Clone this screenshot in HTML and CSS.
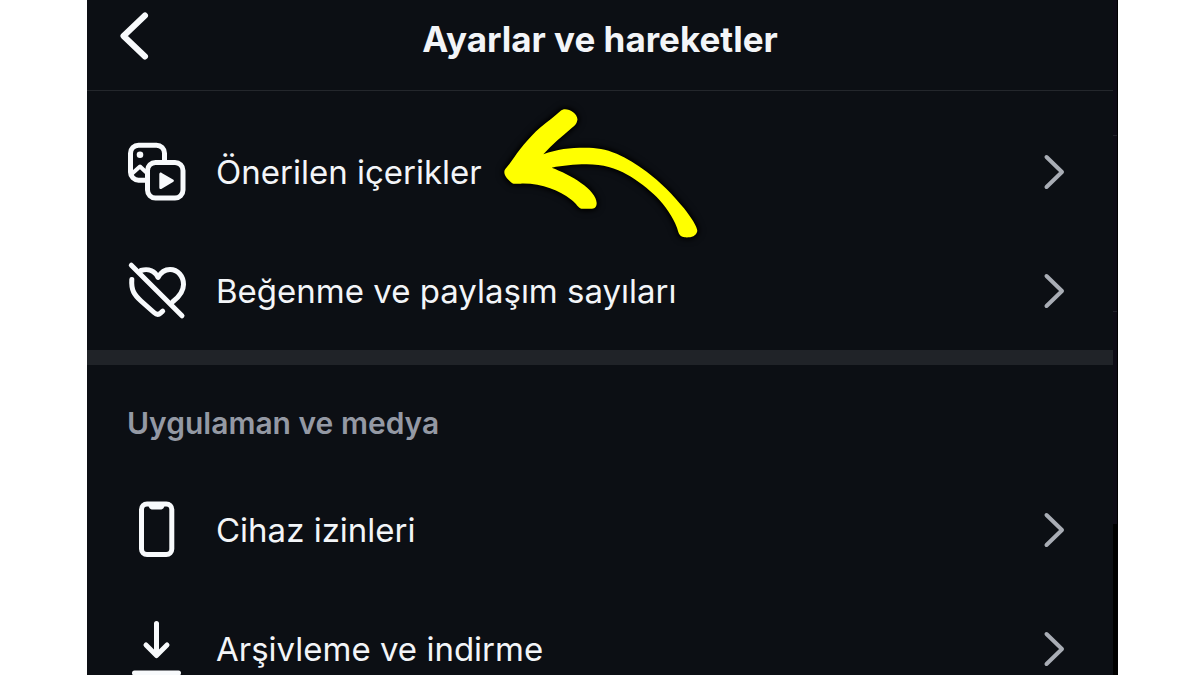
FILE: index.html
```html
<!DOCTYPE html>
<html lang="tr">
<head>
  <meta charset="UTF-8">
  <meta name="viewport" content="width=device-width, initial-scale=1.0">
  <title>Ayarlar ve hareketler</title>
  <link rel="stylesheet" href="styles.css">
</head>
<body>

  <div class="phone">
    <div class="screen">
      <header class="header">
        <button class="back-btn" type="button" aria-label="Geri">
          <svg viewBox="0 0 40 52"><path d="M30 5.500 8.500 26 30 46.500"/></svg>
        </button>
        <h1 class="title">Ayarlar ve hareketler</h1>
      </header>

      <main>
        <ul class="menu menu-top">
          <li>
            <a class="row" href="#">
              <svg class="icon" viewBox="0 0 59 59">
                <path d="M18 38.200h-6.500a8 8 0 0 1-8-8v-19a8 8 0 0 1 8-8h18a8 8 0 0 1 8 8V19"/>
                <path class="thin" d="M4 32.500l9-8 8 7.500"/>
                <circle class="solid" cx="13" cy="12.700" r="3.300"/>
                <rect x="20.500" y="20.500" width="35.500" height="35.500" rx="8"/>
                <path class="solid" d="M32.300 32.200v13.200c0 1.400 1.300 2 2.400 1.300l11.300-6.600c1.200-.7 1.200-2 0-2.700l-11.300-6.500c-1.100-.7-2.400-.1-2.400 1.300z"/>
              </svg>
              <span class="label">Önerilen içerikler
                <svg class="pointer" viewBox="0 0 660 450" aria-hidden="true">
                  <path d="M214 46C228 34 266 54 262 76C260 88 252 94 246 98C216 124 186 148 160 178C200 162 240 158 285 158C320 158 346 162 380 176C412 190 440 208 470 230C510 260 550 300 582 340C604 368 622 396 622 408C618 426 600 428 584 427C564 424 566 410 560 396C550 368 524 330 500 306C476 282 440 254 412 239C376 220 340 208 290 208C250 208 220 212 185 218C240 238 320 284 320 324C320 334 316 341 306 341H274C264 338 260 326 244 314C206 286 154 264 92 266C80 266 72 268 66 264C56 254 42 244 43 230C44 222 54 214 62 202C86 166 116 128 150 98C176 78 196 62 214 46Z"/>
                </svg>
              </span>
              <svg class="chevron" viewBox="0 0 24 36"><path d="M4.500 3 20 18 4.500 33"/></svg>
            </a>
          </li>
          <li>
            <a class="row" href="#">
              <svg class="icon" viewBox="0 0 59 59">
                <path d="M14 9.500c8-2.500 14 1 17 7C34 11 38.500 8.500 43 8.500c8 0 13.500 7 13.500 15 0 7-4 12-10.500 17"/>
                <path d="M4.800 18.500c-.8 11 2.700 15.500 9.200 21.500L27 51.500c2.500 2.300 4.500 2.500 6.500.7l2.200-2"/>
                <path d="M4.300 4.200 55 54.800"/>
              </svg>
              <span class="label">Beğenme ve paylaşım sayıları</span>
              <svg class="chevron" viewBox="0 0 24 36"><path d="M4.500 3 20 18 4.500 33"/></svg>
            </a>
          </li>
        </ul>

        <h2 class="section-title">Uygulaman ve medya</h2>
        <ul class="menu">
          <li>
            <a class="row" href="#">
              <svg class="icon" viewBox="0 0 59 59">
                <rect x="14.500" y="4" width="30.300" height="50.500" rx="5.500"/>
                <path class="solid" d="M21.500 5h16c0 2.500-1.500 4.500-4 4.500h-8c-2.500 0-4-2-4-4.500z"/>
              </svg>
              <span class="label">Cihaz izinleri</span>
              <svg class="chevron" viewBox="0 0 24 36"><path d="M4.500 3 20 18 4.500 33"/></svg>
            </a>
          </li>
          <li>
            <a class="row" href="#">
              <svg class="icon" viewBox="0 0 59 59">
                <path d="M29.500 4.500V36M19 26l10.500 10.500L40 26"/>
                <path d="M7.500 54h44"/>
              </svg>
              <span class="label">Arşivleme ve indirme</span>
              <svg class="chevron" viewBox="0 0 24 36"><path d="M4.500 3 20 18 4.500 33"/></svg>
            </a>
          </li>
        </ul>
      </main>
    </div>
    <div class="edge"></div>
  </div>

</body>
</html>
```

FILE: styles.css
```css
* {
  box-sizing: border-box;
  margin: 0;
  padding: 0;
}
body {
  height: 100vh;
  overflow: hidden;
  padding: 0 82px 0 87px;
  background: #fff;
  color: #f3f5f8;
  font-family: Inter, "Liberation Sans", sans-serif;
}
svg {
  display: block;
  fill: none;
  stroke: currentColor;
  stroke-linecap: round;
  stroke-linejoin: round;
}

.phone {
  display: flex;
  height: 100%;
  overflow: hidden;
  background: #0c0f14;
}
.screen {
  flex: 1;
}
.edge {
  width: 5px;
  border-right: 1px solid #000;
  background: linear-gradient(#0e0c16 0 135px, #22222a 135px 136px, #0e0c16 136px 311px, #22222a 311px 312px, #0e0c16 312px 524px, #000 524px);
}

.header {
  display: grid;
  grid-template-columns: 1fr auto 1fr;
  align-items: start;
  padding: 10px 28px 22px;
  border-bottom: 1px solid #24272c;
}
.back-btn {
  width: 40px;
  height: 52px;
  background: none;
  border: none;
  color: #f8fafc;
  cursor: pointer;
}
.back-btn svg {
  width: 40px;
  height: 52px;
  stroke-width: 6;
}
.title {
  font-size: 35px;
  font-weight: 700;
  line-height: 58px;
}

.menu {
  list-style: none;
}
.menu-top {
  padding-top: 21px;
  border-bottom: 15px solid #202328;
}
.row {
  display: flex;
  align-items: center;
  height: 119px;
  padding: 0 47px 0 40px;
  color: inherit;
  text-decoration: none;
}
.icon {
  width: 59px;
  height: 59px;
  margin-right: 30px;
  color: #f8fafc;
  stroke-width: 5;
}
.icon .thin {
  stroke-width: 4;
}
.icon .solid {
  fill: currentColor;
  stroke: none;
}
.label {
  position: relative;
  font-size: 33px;
  line-height: 42px;
  white-space: nowrap;
}
.chevron {
  width: 24px;
  height: 36px;
  margin-left: auto;
  color: #a9adb5;
  stroke-width: 4;
}

/* hand-drawn arrow over the first row */
.pointer {
  position: absolute;
  top: -56px;
  left: calc(100% + 8px);
  width: 220px;
  height: 150px;
  overflow: visible;
  fill: #ff0;
  stroke: none;
  filter: drop-shadow(0 0 3px #000) drop-shadow(0 0 2px #000);
}

.section-title {
  padding: 40px 40px 29px;
  color: #9499a4;
  font-size: 30px;
  font-weight: 600;
  line-height: 36px;
}
```
